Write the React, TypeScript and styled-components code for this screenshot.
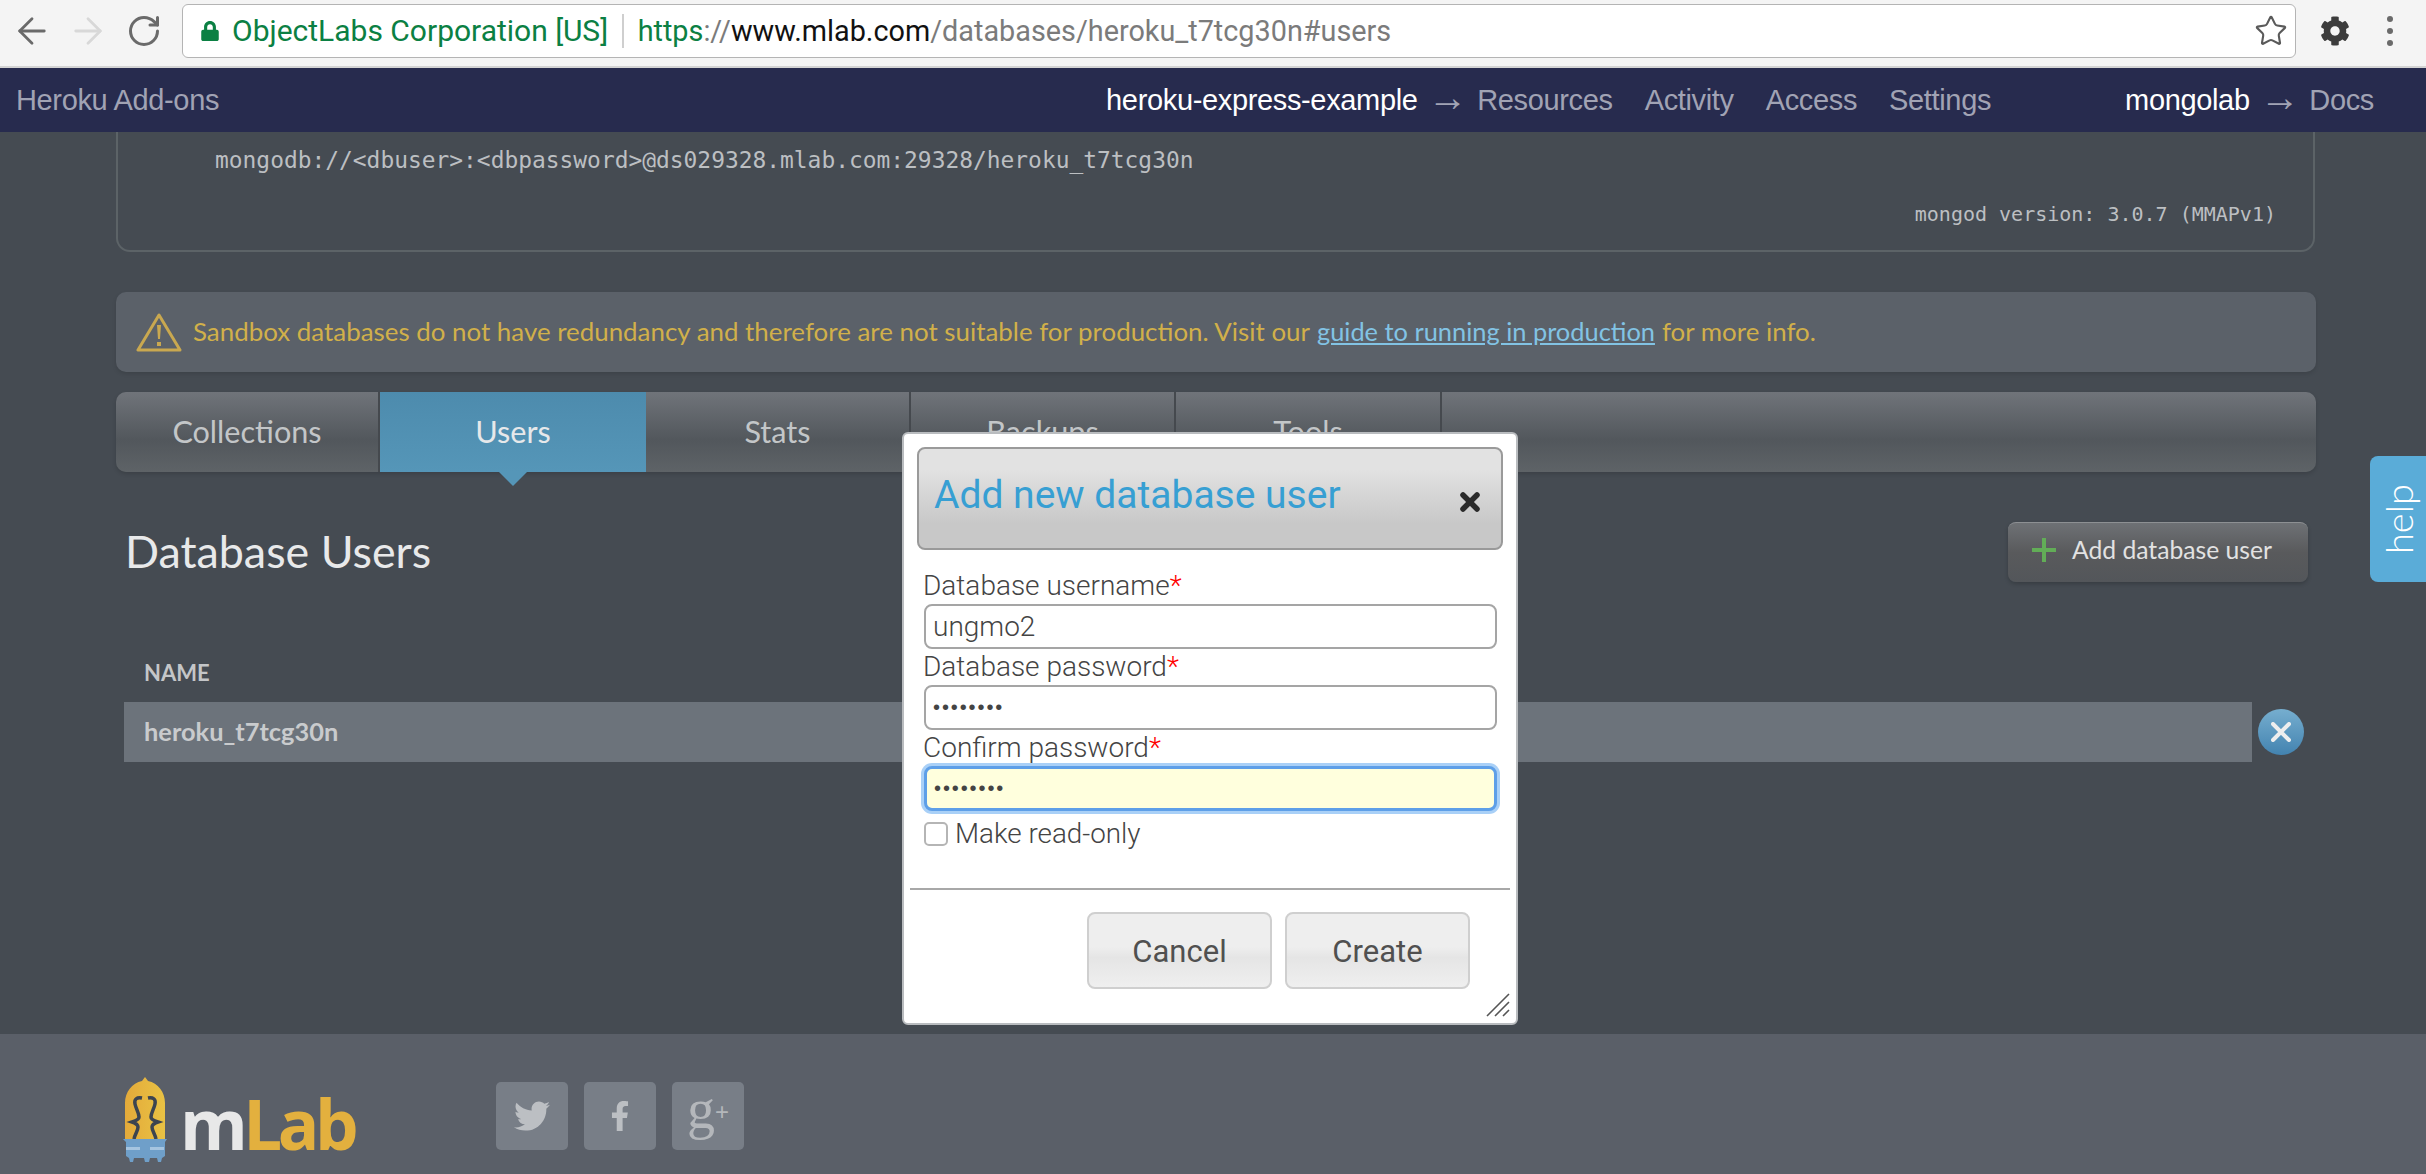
import styled, { createGlobalStyle } from "styled-components";
import { ArrowLeft, ArrowRight, RotateCw, Star } from "lucide-react";
import { FaLock, FaCog, FaTwitter, FaFacebookF } from "react-icons/fa";

const Global = createGlobalStyle`
  html, body {
    margin: 0;
    padding: 0;
    height: 1174px;
    overflow: hidden;
    background: #454b52;
  }
  * { box-sizing: border-box; }
`;
const Page = styled.div`
  position: relative;
  width: 2426px;
  height: 1174px;
  display: flex;
  flex-direction: column;
  overflow: hidden;
  font-family: Lato, sans-serif;
`;
const BrowserBar = styled.div`
  height: 68px;
  flex-shrink: 0;
  display: flex;
  align-items: center;
  background: #f4f4f4;
  border-bottom: 2px solid #d4d4d4;
  padding-bottom: 5px;
`;
const NavIcon = styled.div<{ $w: number; $color: string }>`
  width: ${(p) => p.$w}px;
  display: flex;
  justify-content: center;
  color: ${(p) => p.$color};
`;
const AddressBar = styled.div`
  width: 2114px;
  height: 54px;
  margin-left: 6px;
  display: flex;
  align-items: center;
  background: #fff;
  border: 1.5px solid #b4b4b4;
  border-radius: 6px;
  font-family: Roboto, sans-serif;
  font-size: 28.8px;
  color: #7b7b7b;
  padding-left: 17px;
`;
const Secure = styled.span`
  color: #0b8043;
  margin-left: 12px;
  font-size: 30px;
`;
const Divider = styled.span`
  width: 1.5px;
  height: 34px;
  background: #cfcfcf;
  margin: 0 14px;
`;
const Scheme = styled.span`
  color: #0b8043;
`;
const Host = styled.span`
  color: #111;
`;
const StarWrap = styled.div`
  margin-left: auto;
  margin-right: 7px;
  display: flex;
  color: #5a5a5a;
`;
const Dots = styled.div`
  margin-left: 13px;
  display: flex;
  flex-direction: column;
  gap: 6px;
  span {
    width: 6px;
    height: 6px;
    border-radius: 50%;
    background: #6a6a6a;
  }
`;
const TopNav = styled.nav`
  height: 64px;
  flex-shrink: 0;
  display: flex;
  align-items: center;
  background: #272b4e;
  padding: 0 52px 0 16px;
  font-family: "Liberation Sans", Arial, sans-serif;
  font-size: 29px;
  color: #a1a3b4;
  letter-spacing: -0.35px;
`;
const NavTitle = styled.span`
  margin-right: auto;
`;
const NavStrong = styled.span`
  color: #fff;
`;
const NavArrow = styled.span`
  margin: -7px 10px 0;
  font-size: 40px;
  line-height: 1;
`;
const NavLink = styled.span`
  margin-right: 32px;
`;
const NavGroup = styled.div`
  display: flex;
  align-items: center;
  margin-right: ${(p: { $mr?: number }) => p.$mr ?? 0}px;
`;
const Content = styled.main`
  height: 902px;
  flex-shrink: 0;
  padding: 0 110px 0 116px;
  background: #454b52;
`;
const ConnectionBox = styled.div`
  height: 120px;
  margin-right: 1px;
  border: 2px solid #5c6367;
  border-top: none;
  border-radius: 0 0 14px 14px;
  padding: 14px 37px 22px 97px;
  display: flex;
  flex-direction: column;
  justify-content: space-between;
  font-family: "DejaVu Sans Mono", monospace;
  color: #bcbfc2;
`;
const ConnectionString = styled.div`
  font-size: 22.9px;
  line-height: 28px;
`;
const Version = styled.div`
  font-size: 20px;
  line-height: 28px;
  text-align: right;
`;
const Alert = styled.div`
  height: 80px;
  margin-top: 40px;
  display: flex;
  align-items: center;
  padding: 0 0 3px 20px;
  background: #5b6169;
  border-radius: 10px;
  box-shadow: 0 2px 4px rgba(0, 0, 0, 0.12);
  font-size: 25.9px;
  color: #d1b04a;
`;
const AlertLink = styled.span`
  color: #82c3e4;
  text-decoration: underline;
  margin: 0 7px;
  font-size: 25.4px;
`;
const AlertIcon = styled.svg`
  margin: 3px 11px 0 0;
`;
const Tabs = styled.div`
  height: 80px;
  margin-top: 20px;
  display: flex;
  border-radius: 10px;
  background: linear-gradient(#70747a, #52575c 60%, #5e6367);
  box-shadow: 0 2px 4px rgba(0, 0, 0, 0.15);
`;
const Tab = styled.div<{ $active?: boolean; $w: number }>`
  position: relative;
  width: ${(p) => p.$w}px;
  display: flex;
  align-items: center;
  justify-content: center;
  padding-bottom: 2px;
  font-size: 30.6px;
  color: ${(p) => (p.$active ? "#e6e8ea" : "#c3c6c8")};
  background: ${(p) => (p.$active ? "linear-gradient(#4d8bad, #5596b8)" : "none")};
  border-right: ${(p) => (p.$active ? "none" : "2px solid #45494e")};
  &::after {
    content: "";
    display: ${(p) => (p.$active ? "block" : "none")};
    position: absolute;
    left: 50%;
    top: 100%;
    margin-left: -14px;
    border-left: 14px solid transparent;
    border-right: 14px solid transparent;
    border-top: 14px solid #5596b8;
  }
`;
const SectionHead = styled.div`
  margin-top: 50px;
  display: flex;
  align-items: center;
  justify-content: space-between;
  padding: 0 8px 0 9px;
`;
const Heading = styled.h2`
  margin: -3px 0 0;
  font-size: 44.8px;
  font-weight: 400;
  color: #e8e9ea;
`;
const AddButton = styled.div`
  width: 300px;
  height: 60px;
  display: flex;
  align-items: center;
  padding: 0 0 6px 24px;
  gap: 16px;
  border-radius: 8px;
  border-top: 1px solid #8d9093;
  background: linear-gradient(#6e7175, #595a5c 50%, #53565a);
  box-shadow: 0 2px 4px rgba(0, 0, 0, 0.2);
  font-size: 24.7px;
  color: #e2e2e2;
`;
const TableHead = styled.div`
  margin-top: 70px;
  height: 50px;
  display: flex;
  align-items: center;
  padding: 0 0 10px 28px;
  font-size: 22px;
  font-weight: 700;
  color: #c4c6c8;
`;
const TableRow = styled.div`
  display: flex;
  align-items: center;
  gap: 6px;
  padding-left: 8px;
`;
const RowName = styled.div`
  width: 2128px;
  height: 60px;
  display: flex;
  align-items: center;
  padding: 0 0 3px 20px;
  background: #6c737b;
  font-size: 25.4px;
  font-weight: 700;
  color: #c9cbcd;
`;
const DeleteButton = styled.div`
  width: 46px;
  height: 46px;
  border-radius: 50%;
  display: flex;
  align-items: center;
  justify-content: center;
  background: linear-gradient(#76aecf, #4383b0);
  color: #eee;
`;
const Footer = styled.footer`
  flex: 1;
  display: flex;
  background: #5a5f68;
  padding: 43px 0 0 122px;
`;
const Logo = styled.div`
  width: 374px;
  display: flex;
  align-items: flex-start;
  gap: 12px;
`;
const LogoText = styled.div`
  margin-top: 1px;
  font-family: "Open Sans", sans-serif;
  font-size: 69px;
  line-height: 90px;
  font-weight: 700;
  letter-spacing: -4.5px;
  color: #e8e8e8;
  span {
    color: #e3b03e;
  }
`;
const Socials = styled.div`
  margin-top: 5px;
  display: flex;
  gap: 16px;
`;
const Social = styled.div`
  width: 72px;
  height: 68px;
  border-radius: 5px;
  background: #787e87;
  color: #bcbfc3;
  display: flex;
  align-items: center;
  justify-content: center;
`;
const GooglePlus = styled.span`
  font-family: "Liberation Serif", serif;
  font-size: 56px;
  line-height: 1;
  margin-top: -14px;
  color: #b4b7bb;
  sup {
    font-family: "Liberation Sans", sans-serif;
    font-size: 24px;
    vertical-align: 8px;
    line-height: 0;
  }
`;
const Help = styled.div`
  position: absolute;
  left: 2370px;
  top: 456px;
  width: 56px;
  height: 126px;
  display: flex;
  align-items: center;
  justify-content: center;
  background: #5aacd8;
  border-radius: 8px 0 0 8px;
  color: #fff;
  font-size: 38px;
  font-weight: 300;
  span {
    transform: rotate(-90deg);
  }
`;
const Dialog = styled.div`
  position: absolute;
  left: 902px;
  top: 432px;
  width: 616px;
  height: 593px;
  background: #fff;
  border: 2px solid #b9bcbf;
  border-radius: 6px;
  padding: 13px 13px 0;
  font-family: Roboto, sans-serif;
  font-weight: 300;
  color: #444;
`;
const DialogHead = styled.div`
  height: 103px;
  display: flex;
  align-items: center;
  justify-content: space-between;
  padding: 0 21px 0 15px;
  background: linear-gradient(#e2e2e2 20%, #c8c8c8 75%);
  border: 2px solid #9a9a9a;
  border-radius: 8px;
`;
const DialogTitle = styled.h3`
  margin: 0 0 8px;
  font-size: 39px;
  font-weight: 400;
  color: #379fd3;
`;
const DialogClose = styled.svg`
  margin-top: 6px;
`;
const Form = styled.form`
  margin: 18px 6px 0 7px;
  display: flex;
  flex-direction: column;
`;
const FieldLabel = styled.label`
  height: 36px;
  margin-left: -1px;
  font-size: 28px;
  line-height: 36px;
  white-space: nowrap;
`;
const Required = styled.span`
  color: #f00;
`;
const Field = styled.input<{ $focus?: boolean }>`
  width: 573px;
  height: 45px;
  padding: 0 7px;
  font-family: ${(p) => (p.type === "password" ? '"Liberation Sans"' : "Roboto")}, sans-serif;
  font-weight: 300;
  font-size: ${(p) => (p.type === "password" ? 20 : 28)}px;
  letter-spacing: ${(p) => (p.type === "password" ? 1.9 : 0)}px;
  color: #444;
  outline: none;
  border-radius: 8px;
  border: ${(p) => (p.$focus ? "3px solid #5e9fe8" : "2px solid #a5a5a5")};
  background: ${(p) => (p.$focus ? "#ffffdd" : "#fff")};
  box-shadow: ${(p) => (p.$focus ? "0 0 0 3px #a9d0f7" : "none")};
`;
const CheckRow = styled.div`
  margin-top: 11px;
  display: flex;
  align-items: center;
  gap: 7px;
  height: 24px;
  font-size: 27.8px;
  line-height: 20px;
`;
const CheckBox = styled.span`
  width: 24px;
  height: 24px;
  border: 2px solid #b5b5b5;
  border-radius: 5px;
  background: #fff;
`;
const Rule = styled.div`
  height: 2px;
  margin: 42px -7px 0;
  background: #a8a8a8;
`;
const Actions = styled.div`
  margin-top: 22px;
  padding-right: 33px;
  display: flex;
  justify-content: flex-end;
  gap: 13px;
`;
const DialogButton = styled.div`
  width: 185px;
  height: 77px;
  display: flex;
  align-items: center;
  justify-content: center;
  padding-top: 2px;
  border: 2px solid #cfcfcf;
  border-radius: 8px;
  background: linear-gradient(#eeeeee 45%, #e5e5e5 60%, #efefef);
  font-size: 31px;
  font-weight: 400;
  color: #505050;
`;
const Grip = styled.svg`
  position: absolute;
  right: 6px;
  bottom: 6px;
`;

const tabs = [
  { name: "Collections", w: 264 },
  { name: "Users", w: 266, active: true },
  { name: "Stats", w: 265 },
  { name: "Backups", w: 265 },
  { name: "Tools", w: 266 },
];

function MlabBulb() {
  return (
    <svg width="46" height="86" viewBox="0 0 46 86">
      <defs>
        <linearGradient id="bulb" x1="0" x2="1" y1="0" y2="0">
          <stop offset="0" stopColor="#e4aa3a" />
          <stop offset="1" stopColor="#e9c244" />
        </linearGradient>
      </defs>
      <path d="M23 0l3 4c10 2 17 11 17 22v37H3V26C3 15 10 6 20 4z" fill="url(#bulb)" />
      <path
        d="M20 21c-5-1-8 1-7 6s4 9 4 13c0 3-4 4-7 5 3 1 6 2 6 5 0 4-3 7-4 12M26 21c5-1 8 1 7 6s-4 9-4 13c0 3 4 4 7 5-3 1-6 2-6 5 0 4 3 7 4 12"
        fill="none"
        stroke="#3c4450"
        strokeWidth="3.5"
      />
      <path d="M1 62h44l-2 3v14l-3 2-1 4h-3l-1-4H28l-1 4h-4l-1-4H12l-1 4H8l-1-4-3-2V65z" fill="#6f9fc9" />
      <path d="M4 70h14v3H4zM28 70h14v3H28z" fill="#a6c5e0" />
    </svg>
  );
}

export default function App() {
  return (
    <>
      <Global />
      <Page>
        <BrowserBar>
          <NavIcon $w={64} $color="#6a6a6a">
            <ArrowLeft size={42} strokeWidth={1.6} />
          </NavIcon>
          <NavIcon $w={48} $color="#d8d8d8">
            <ArrowRight size={42} strokeWidth={1.6} />
          </NavIcon>
          <NavIcon $w={64} $color="#6a6a6a">
            <RotateCw size={36} strokeWidth={2} />
          </NavIcon>
          <AddressBar>
            <FaLock size={20} color="#0b8043" />
            <Secure>ObjectLabs Corporation [US]</Secure>
            <Divider />
            <Scheme>https</Scheme>
            <span>://</span>
            <Host>www.mlab.com</Host>
            <span>/databases/heroku_t7tcg30n#users</span>
            <StarWrap>
              <Star size={34} strokeWidth={1.5} />
            </StarWrap>
          </AddressBar>
          <NavIcon $w={78} $color="#3c3c3c">
            <FaCog size={30} />
          </NavIcon>
          <Dots>
            <span />
            <span />
            <span />
          </Dots>
        </BrowserBar>
        <TopNav>
          <NavTitle>Heroku Add-ons</NavTitle>
          <NavGroup $mr={134}>
            <NavStrong>heroku-express-example</NavStrong>
            <NavArrow>→</NavArrow>
            <NavLink>Resources</NavLink>
            <NavLink>Activity</NavLink>
            <NavLink>Access</NavLink>
            <span>Settings</span>
          </NavGroup>
          <NavGroup>
            <NavStrong>mongolab</NavStrong>
            <NavArrow>→</NavArrow>
            <span>Docs</span>
          </NavGroup>
        </TopNav>
        <Content>
          <ConnectionBox>
            <ConnectionString>mongodb://&lt;dbuser&gt;:&lt;dbpassword&gt;@ds029328.mlab.com:29328/heroku_t7tcg30n</ConnectionString>
            <Version>mongod version: 3.0.7 (MMAPv1)</Version>
          </ConnectionBox>
          <Alert>
            <AlertIcon width="46" height="40" viewBox="0 0 46 40">
              <path d="M23 3L2 38h42z" fill="none" stroke="#c9a850" strokeWidth="3" strokeLinejoin="round" />
              <path d="M21 13h4l-1 14h-2zM21 30h4v4h-4z" fill="#c9a850" />
            </AlertIcon>
            Sandbox databases do not have redundancy and therefore are not suitable for production. Visit our
            <AlertLink>guide to running in production</AlertLink>
            for more info.
          </Alert>
          <Tabs>
            {tabs.map((tab) => (
              <Tab key={tab.name} $w={tab.w} $active={tab.active}>
                {tab.name}
              </Tab>
            ))}
          </Tabs>
          <SectionHead>
            <Heading>Database Users</Heading>
            <AddButton>
              <svg width="24" height="24" viewBox="0 0 24 24">
                <path d="M10 0h4v10h10v4H14v10h-4V14H0v-4h10z" fill="#62ad57" />
              </svg>
              Add database user
            </AddButton>
          </SectionHead>
          <TableHead>NAME</TableHead>
          <TableRow>
            <RowName>heroku_t7tcg30n</RowName>
            <DeleteButton>
              <svg width="20" height="20" viewBox="0 0 20 20">
                <path d="M2 2l16 16M18 2L2 18" stroke="#eee" strokeWidth="4" strokeLinecap="round" />
              </svg>
            </DeleteButton>
          </TableRow>
        </Content>
        <Footer>
          <Logo>
            <MlabBulb />
            <LogoText>
              m<span>Lab</span>
            </LogoText>
          </Logo>
          <Socials>
            <Social>
              <FaTwitter size={36} />
            </Social>
            <Social>
              <FaFacebookF size={30} />
            </Social>
            <Social>
              <GooglePlus>
                g<sup>+</sup>
              </GooglePlus>
            </Social>
          </Socials>
        </Footer>
        <Help>
          <span>help</span>
        </Help>
        <Dialog>
          <DialogHead>
            <DialogTitle>Add new database user</DialogTitle>
            <DialogClose width="20" height="20" viewBox="0 0 20 20">
              <path d="M3 3l14 14M17 3L3 17" stroke="#2a2a2a" strokeWidth="5.5" strokeLinecap="round" />
            </DialogClose>
          </DialogHead>
          <Form>
            <FieldLabel>
              Database username<Required>*</Required>
            </FieldLabel>
            <Field type="text" value="ungmo2" readOnly />
            <FieldLabel>
              Database password<Required>*</Required>
            </FieldLabel>
            <Field type="password" value="password" readOnly />
            <FieldLabel>
              Confirm password<Required>*</Required>
            </FieldLabel>
            <Field type="password" value="password" readOnly $focus />
            <CheckRow>
              <CheckBox />
              Make read-only
            </CheckRow>
          </Form>
          <Rule />
          <Actions>
            <DialogButton>Cancel</DialogButton>
            <DialogButton>Create</DialogButton>
          </Actions>
          <Grip width="24" height="24" viewBox="0 0 24 24">
            <path d="M1 23L23 1M9 23L23 9M17 23l6-6" stroke="#555" strokeWidth="1.6" />
          </Grip>
        </Dialog>
      </Page>
    </>
  );
}
